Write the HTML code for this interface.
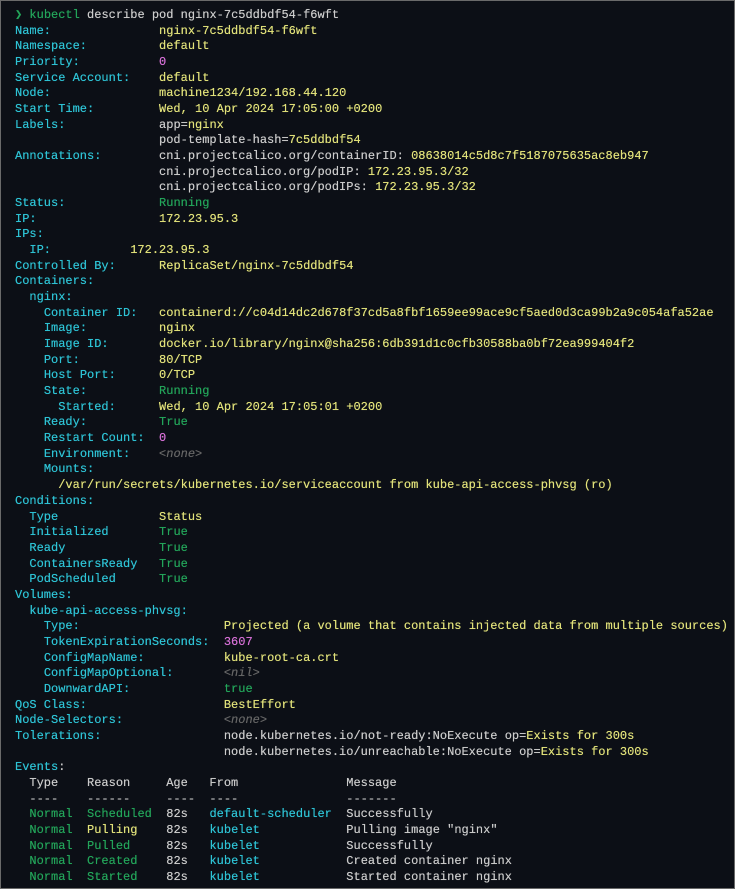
<!DOCTYPE html>
<html><head><meta charset="utf-8"><style>
html,body{margin:0;padding:0;}
body{width:735px;height:889px;background:#0c0f16;overflow:hidden;position:relative;}
.frame{position:absolute;left:0;top:0;width:733px;height:887px;border:1px solid #6a6a6a;}
pre{position:absolute;left:15px;top:8px;margin:0;font-family:"Liberation Mono","DejaVu Sans Mono",monospace;font-size:12px;line-height:15.67px;color:#cccccc;white-space:pre;text-shadow:0 0 0.4px currentColor;}
.c{color:#2ec4d6}.y{color:#e2e27a}.g{color:#23a55a}.m{color:#d670d6}.n{color:#666;font-style:italic}.w{color:#cccccc}
</style></head><body><div class="frame"></div>
<pre><span class="g">❯ kubectl</span> describe pod nginx-7c5ddbdf54-f6wft
<span class="c">Name:</span>               <span class="y">nginx-7c5ddbdf54-f6wft</span>
<span class="c">Namespace:</span>          <span class="y">default</span>
<span class="c">Priority:</span>           <span class="m">0</span>
<span class="c">Service Account:</span>    <span class="y">default</span>
<span class="c">Node:</span>               <span class="y">machine1234/192.168.44.120</span>
<span class="c">Start Time:</span>         <span class="y">Wed, 10 Apr 2024 17:05:00 +0200</span>
<span class="c">Labels:</span>             app=<span class="y">nginx</span>
                    pod-template-hash=<span class="y">7c5ddbdf54</span>
<span class="c">Annotations:</span>        cni.projectcalico.org/containerID: <span class="y">08638014c5d8c7f5187075635ac8eb947</span>
                    cni.projectcalico.org/podIP: <span class="y">172.23.95.3/32</span>
                    cni.projectcalico.org/podIPs: <span class="y">172.23.95.3/32</span>
<span class="c">Status:</span>             <span class="g">Running</span>
<span class="c">IP:</span>                 <span class="y">172.23.95.3</span>
<span class="c">IPs:</span>
  <span class="c">IP:</span>           <span class="y">172.23.95.3</span>
<span class="c">Controlled By:</span>      <span class="y">ReplicaSet/nginx-7c5ddbdf54</span>
<span class="c">Containers:</span>
  <span class="c">nginx:</span>
    <span class="c">Container ID:</span>   <span class="y">containerd://c04d14dc2d678f37cd5a8fbf1659ee99ace9cf5aed0d3ca99b2a9c054afa52ae</span>
    <span class="c">Image:</span>          <span class="y">nginx</span>
    <span class="c">Image ID:</span>       <span class="y">docker.io/library/nginx@sha256:6db391d1c0cfb30588ba0bf72ea999404f2</span>
    <span class="c">Port:</span>           <span class="y">80/TCP</span>
    <span class="c">Host Port:</span>      <span class="y">0/TCP</span>
    <span class="c">State:</span>          <span class="g">Running</span>
      <span class="c">Started:</span>      <span class="y">Wed, 10 Apr 2024 17:05:01 +0200</span>
    <span class="c">Ready:</span>          <span class="g">True</span>
    <span class="c">Restart Count:</span>  <span class="m">0</span>
    <span class="c">Environment:</span>    <span class="n">&lt;none&gt;</span>
    <span class="c">Mounts:</span>
      <span class="y">/var/run/secrets/kubernetes.io/serviceaccount from kube-api-access-phvsg (ro)</span>
<span class="c">Conditions:</span>
  <span class="c">Type</span>              <span class="y">Status</span>
  <span class="c">Initialized</span>       <span class="g">True</span>
  <span class="c">Ready</span>             <span class="g">True</span>
  <span class="c">ContainersReady</span>   <span class="g">True</span>
  <span class="c">PodScheduled</span>      <span class="g">True</span>
<span class="c">Volumes:</span>
  <span class="c">kube-api-access-phvsg:</span>
    <span class="c">Type:</span>                    <span class="y">Projected (a volume that contains injected data from multiple sources)</span>
    <span class="c">TokenExpirationSeconds:</span>  <span class="m">3607</span>
    <span class="c">ConfigMapName:</span>           <span class="y">kube-root-ca.crt</span>
    <span class="c">ConfigMapOptional:</span>       <span class="n">&lt;nil&gt;</span>
    <span class="c">DownwardAPI:</span>             <span class="g">true</span>
<span class="c">QoS Class:</span>                   <span class="y">BestEffort</span>
<span class="c">Node-Selectors:</span>              <span class="n">&lt;none&gt;</span>
<span class="c">Tolerations:</span>                 node.kubernetes.io/not-ready:NoExecute op=<span class="y">Exists for 300s</span>
                             node.kubernetes.io/unreachable:NoExecute op=<span class="y">Exists for 300s</span>
<span class="c">Events</span>:
  Type    Reason     Age   From               Message
  ----    ------     ----  ----               -------
  <span class="g">Normal</span>  <span class="g">Scheduled</span>  82s   <span class="c">default-scheduler</span>  Successfully
  <span class="g">Normal</span>  <span class="y">Pulling</span>    82s   <span class="c">kubelet</span>            Pulling image "nginx"
  <span class="g">Normal</span>  <span class="g">Pulled</span>     82s   <span class="c">kubelet</span>            Successfully
  <span class="g">Normal</span>  <span class="g">Created</span>    82s   <span class="c">kubelet</span>            Created container nginx
  <span class="g">Normal</span>  <span class="g">Started</span>    82s   <span class="c">kubelet</span>            Started container nginx</pre>
</body></html>
